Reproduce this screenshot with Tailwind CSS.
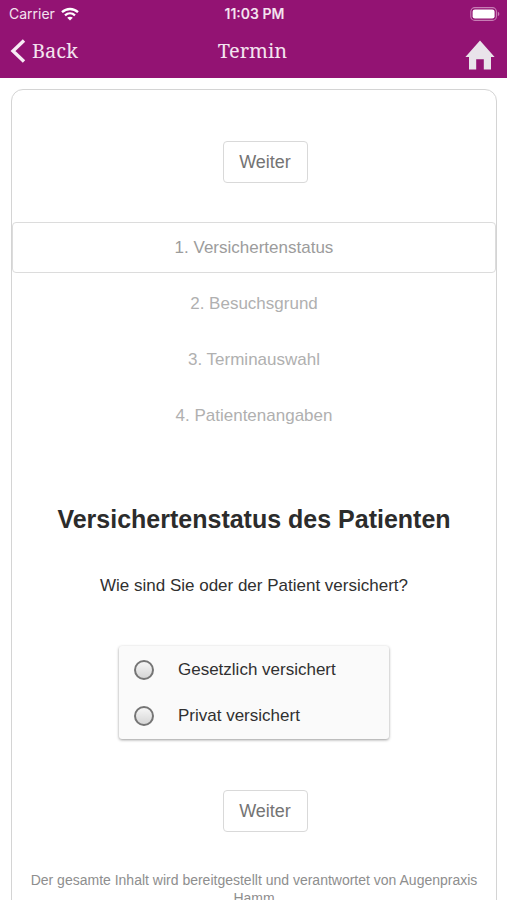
<!DOCTYPE html>
<html lang="de">
<head>
<meta charset="utf-8">
<meta name="viewport" content="width=device-width, initial-scale=1">
<title>Termin</title>
<script src="https://cdn.jsdelivr.net/npm/@tailwindcss/browser@4"></script>
</head>
<body class="bg-white font-['Liberation_Sans',Arial,sans-serif] text-[#303030]">
<header class="bg-[#931373] text-[#f3e3ef]">
  <div class="grid h-7 grid-cols-3 items-center pl-[9px] pr-[7px] font-[Inter,sans-serif] text-[14px] leading-5">
    <div class="flex items-center gap-[6px]">
      <span>Carrier</span>
      <svg class="h-[14px] w-[18px]" viewBox="0 0 18 14" fill="none" stroke="#fff" stroke-width="2.3" aria-hidden="true">
        <path d="M1 5.2C5.6 .9 12.4 .9 17 5.2"/>
        <path d="M4 8.3c2.9-2.6 7.1-2.6 10 0"/>
        <path d="M9 13.6 6.2 10.8c1.6-1.4 4-1.4 5.6 0z" fill="#fff" stroke="none"/>
      </svg>
    </div>
    <span class="text-center font-semibold">11:03 PM</span>
    <svg class="h-[14px] w-[30px] justify-self-end" viewBox="0 0 30 14" aria-hidden="true">
      <rect x=".8" y=".6" width="25.6" height="12.8" rx="4" fill="none" stroke="#c77fb5" stroke-width="1.1"/>
      <rect x="2.6" y="2.4" width="22" height="9.2" rx="2.3" fill="#fff"/>
      <path d="M27.8 4.8c2 .7 2 3.7 0 4.4z" fill="#c77fb5"/>
    </svg>
  </div>
  <nav class="grid h-[50px] grid-cols-3 items-start pl-[10px] pr-3 pt-[11px] font-['Noto_Serif','DejaVu_Serif_Condensed','DejaVu_Serif',serif] text-[20px] leading-6">
    <a href="#" class="flex items-center gap-[6px]">
      <svg class="h-6 w-4" viewBox="0 0 16 24" fill="none" stroke="#f6ebf4" stroke-width="3.4" aria-hidden="true"><path d="M14 1.5 3 12l11 10.5"/></svg>
      <span>Back</span>
    </a>
    <h1 class="text-center">Termin</h1>
    <a href="#" aria-label="Startseite" class="justify-self-end pt-[1px]">
      <svg class="h-[30px] w-[30px]" viewBox="0 0 30 30" fill="#e9e3ea" aria-hidden="true"><path d="M15 .5 29.6 17H26v12.5h-7.2V19.2h-7.6v10.3H4V17H.4z"/></svg>
    </a>
  </nav>
</header>
<main class="mb-3 ml-[11px] mr-[10px] mt-[11px] flex flex-col items-center rounded-xl border border-[#d4d4d4] pb-8 text-[17px]">
  <button type="button" class="ml-[22px] mt-[51px] h-[42px] w-[85px] rounded-[4px] border border-[#d9d9d9] text-[18px] text-[#747474]">Weiter</button>
  <ol class="mt-[39px] flex flex-col gap-[5px] self-stretch text-center leading-[51px] text-[#b0b0b0]">
    <li class="rounded-[4px] text-[#9c9c9c] outline outline-[#dcdcdc] -outline-offset-1">1. Versichertenstatus</li>
    <li>2. Besuchsgrund</li>
    <li>3. Terminauswahl</li>
    <li>4. Patientenangaben</li>
  </ol>
  <h2 class="mt-[62px] text-[25px] font-bold leading-8 text-[#2c2c2c]">Versichertenstatus des Patienten</h2>
  <form class="mt-[39px] flex flex-col items-center self-stretch">
    <fieldset class="flex flex-col items-center">
      <legend class="mx-auto leading-6">Wie sind Sie oder der Patient versichert?</legend>
      <div class="mt-12 flex w-[270px] flex-col rounded-[3px] bg-[#fafafa] pt-[1px] shadow-[0_1px_3px_#00000066]">
        <label class="flex h-[46px] items-center gap-6 pl-[15px]">
          <input type="radio" name="versicherung" class="h-5 w-5 appearance-none rounded-full border-2 border-[#757575] bg-linear-to-b from-[#f6f6f6] to-[#d6d6d6] checked:border-[6px]">
          <span>Gesetzlich versichert</span>
        </label>
        <label class="flex h-[46px] items-center gap-6 pl-[15px]">
          <input type="radio" name="versicherung" class="h-5 w-5 appearance-none rounded-full border-2 border-[#757575] bg-linear-to-b from-[#f6f6f6] to-[#d6d6d6] checked:border-[6px]">
          <span>Privat versichert</span>
        </label>
      </div>
    </fieldset>
    <button type="button" class="ml-[22px] mt-[51px] h-[42px] w-[85px] rounded-[4px] border border-[#d9d9d9] text-[18px] text-[#747474]">Weiter</button>
  </form>
  <p class="mt-[39px] px-4 text-center text-[14px] leading-[18px] text-[#8e8e8e]">Der gesamte Inhalt wird bereitgestellt und verantwortet von Augenpraxis Hamm</p>
</main>
</body>
</html>
